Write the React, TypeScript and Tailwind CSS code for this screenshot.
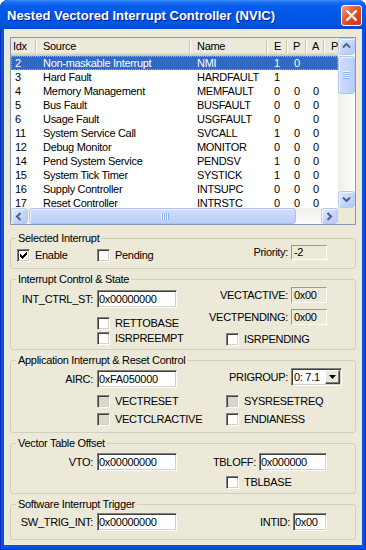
import type { ReactNode } from "react";

type Row = [string, string, string, string, string, string];

const rows: Row[] = [
  ["2", "Non-maskable Interrupt", "NMI", "1", "0", ""],
  ["3", "Hard Fault", "HARDFAULT", "1", "", ""],
  ["4", "Memory Management", "MEMFAULT", "0", "0", "0"],
  ["5", "Bus Fault", "BUSFAULT", "0", "0", "0"],
  ["6", "Usage Fault", "USGFAULT", "0", "", "0"],
  ["11", "System Service Call", "SVCALL", "1", "0", "0"],
  ["12", "Debug Monitor", "MONITOR", "0", "0", "0"],
  ["14", "Pend System Service", "PENDSV", "1", "0", "0"],
  ["15", "System Tick Timer", "SYSTICK", "1", "0", "0"],
  ["16", "Supply Controller", "INTSUPC", "0", "0", "0"],
  ["17", "Reset Controller", "INTRSTC", "0", "0", "0"],
];

const cols = [
  { label: "Idx", w: "w-[26px]", hpl: "pl-[2px]", pl: "pl-[4px]" },
  { label: "Source", w: "w-[154px]", hpl: "pl-[6px]", pl: "pl-[6px]" },
  { label: "Name", w: "w-[77px]", hpl: "pl-[6px]", pl: "pl-[6px]" },
  { label: "E", w: "w-[20px]", hpl: "pl-[6px]", pl: "pl-[6px]" },
  { label: "P", w: "w-[19px]", hpl: "pl-[5px]", pl: "pl-[6px]" },
  { label: "A", w: "w-[18px]", hpl: "pl-[5px]", pl: "pl-[6px]" },
  { label: "P", w: "w-[40px]", hpl: "pl-[6px]", pl: "pl-[6px]" },
];

function Check({ checked = false, disabled = false }: { checked?: boolean; disabled?: boolean }) {
  return (
    <span
      className={`block h-[13px] w-[13px] shrink-0 border border-t-[#808080] border-l-[#808080] border-b-white border-r-white shadow-[inset_1px_1px_0_#404040,inset_-1px_-1px_0_#D4D0C8] ${
        disabled ? "bg-[#D9D6CD]" : "bg-white"
      }`}
    >
      {checked && (
        <svg width="11" height="11" viewBox="0 0 11 11" shapeRendering="crispEdges" className="block">
          <rect x="2" y="4" width="1" height="3" fill="#000" />
          <rect x="3" y="5" width="1" height="3" fill="#000" />
          <rect x="4" y="6" width="1" height="3" fill="#000" />
          <rect x="5" y="5" width="1" height="3" fill="#000" />
          <rect x="6" y="4" width="1" height="3" fill="#000" />
          <rect x="7" y="3" width="1" height="3" fill="#000" />
          <rect x="8" y="2" width="1" height="3" fill="#000" />
        </svg>
      )}
    </span>
  );
}

function CheckRow({
  label,
  checked,
  disabled,
  className = "",
}: {
  label: string;
  checked?: boolean;
  disabled?: boolean;
  className?: string;
}) {
  return (
    <div className={`flex items-center gap-[5px] ${className}`}>
      <Check checked={checked} disabled={disabled} />
      <span className="leading-[13px] whitespace-nowrap">{label}</span>
    </div>
  );
}

function Edit({ value, w, h = "h-[18px]", ro = false }: { value: string; w: string; h?: string; ro?: boolean }) {
  const look = ro
    ? "border-t-[#9C9A8E] border-l-[#9C9A8E] border-b-white border-r-white bg-[#ECE9D8] pl-[2px]"
    : "border-t-[#808080] border-l-[#808080] border-b-white border-r-white bg-white pl-[1px] shadow-[inset_1px_1px_0_#404040,inset_-1px_-1px_0_#D4D0C8]";
  return (
    <div className={`flex shrink-0 items-center overflow-hidden whitespace-nowrap border ${look} ${w} ${h}`}>
      {value}
    </div>
  );
}

function Group({ title, h, children }: { title: string; h: string; children: ReactNode }) {
  return (
    <div className={`relative flex shrink-0 rounded-[3px] border border-[#D0D0BF] ${h}`}>
      <span className="absolute -top-[7px] left-[5px] bg-[#ECE9D8] px-[2px] leading-[13px] whitespace-nowrap">
        {title}
      </span>
      {children}
    </div>
  );
}

function Arrow({ dir }: { dir: "up" | "down" | "left" | "right" }) {
  const d = {
    up: "M1 5.5 L4.5 2 L8 5.5",
    down: "M1 2.5 L4.5 6 L8 2.5",
    left: "M5.5 1 L2 4.5 L5.5 8",
    right: "M2.5 1 L6 4.5 L2.5 8",
  }[dir];
  return (
    <svg width="9" height="9" viewBox="0 0 9 9" className="block">
      <path d={d} fill="none" stroke="#4D6185" strokeWidth="2" />
    </svg>
  );
}

function SBtn({ dir, size }: { dir: "up" | "down" | "left" | "right"; size: string }) {
  return (
    <div
      className={`flex shrink-0 items-center justify-center rounded-[3px] border border-[#B7CAF5] bg-[linear-gradient(135deg,#E0EAFE,#C2D3FB_60%,#B3C8F6)] shadow-[inset_1px_1px_0_#F2F6FF] ${size}`}
    >
      <Arrow dir={dir} />
    </div>
  );
}

function VScroll() {
  return (
    <div className="flex h-[170px] w-[17px] shrink-0 flex-col bg-[linear-gradient(90deg,#F0EFE9,#FDFDFA)]">
      <SBtn dir="up" size="h-[17px] w-[17px]" />
      <div className="mt-[1px] flex h-[38px] w-[17px] flex-col items-center justify-center rounded-[3px] border border-[#AFC3F0] bg-[linear-gradient(90deg,#CFDDFE,#BBCEF8)] shadow-[inset_1px_1px_0_#EEF3FF]">
        <div className="h-[2px] w-[7px] border-t border-t-[#EEF4FE] bg-[#8DAEF4]" />
        <div className="h-[2px] w-[7px] border-t border-t-[#EEF4FE] bg-[#8DAEF4]" />
        <div className="h-[2px] w-[7px] border-t border-t-[#EEF4FE] bg-[#8DAEF4]" />
        <div className="h-[2px] w-[7px] border-t border-t-[#EEF4FE] bg-[#8DAEF4]" />
      </div>
      <div className="flex-1" />
      <SBtn dir="down" size="h-[17px] w-[17px]" />
    </div>
  );
}

function HScroll() {
  return (
    <div className="flex h-[16px] w-[327px] shrink-0 bg-[linear-gradient(180deg,#F0EFE9,#FDFDFA)]">
      <SBtn dir="left" size="h-[16px] w-[17px]" />
      <div className="ml-[1px] flex h-[16px] w-[267px] items-center justify-center rounded-[3px] border border-[#AFC3F0] bg-[linear-gradient(180deg,#CFDDFE,#BBCEF8)] shadow-[inset_1px_1px_0_#EEF3FF]">
        <div className="flex h-[7px] pl-[4px]">
          <div className="h-[7px] w-[2px] border-l border-l-[#EEF4FE] bg-[#8DAEF4]" />
          <div className="h-[7px] w-[2px] border-l border-l-[#EEF4FE] bg-[#8DAEF4]" />
          <div className="h-[7px] w-[2px] border-l border-l-[#EEF4FE] bg-[#8DAEF4]" />
          <div className="h-[7px] w-[2px] border-l border-l-[#EEF4FE] bg-[#8DAEF4]" />
        </div>
      </div>
      <div className="flex-1" />
      <SBtn dir="right" size="h-[16px] w-[17px]" />
    </div>
  );
}

function ListView() {
  return (
    <div className="flex h-[188px] w-[346px] shrink-0 flex-col border border-[#7F9DB9] bg-white">
      <div className="flex h-[170px]">
        <div className="flex w-[327px] flex-col overflow-hidden">
          <div className="flex h-[18px] shrink-0 bg-[#EBEADB] shadow-[inset_0_-1px_0_#CBC7B8,inset_0_-2px_0_#D6D2C2,inset_0_-3px_0_#E2DECD]">
            {cols.map((c, i) => (
              <div key={i} className={`flex h-full shrink-0 ${c.w}`}>
                <span className={`flex flex-1 items-center overflow-hidden whitespace-nowrap pb-[1px] ${c.hpl}`}>
                  {c.label}
                </span>
                <span className="mt-[2px] mb-[2px] w-[2px] shrink-0 border-l border-r border-l-[#C7C5B2] border-r-white" />
              </div>
            ))}
          </div>
          <div className="flex flex-col">
            {rows.map((r, i) => {
              const sel = i === 0;
              return (
                <div
                  key={i}
                  className={`flex h-[14px] shrink-0 leading-[14px] ${
                    sel ? "bg-[#316AC5] text-white outline-1 -outline-offset-1 outline-dotted outline-[#D9A441]" : ""
                  }`}
                >
                  {r.map((v, j) => (
                    <span key={j} className={`shrink-0 overflow-hidden whitespace-nowrap ${cols[j].w} ${cols[j].pl}`}>
                      {v}
                    </span>
                  ))}
                </div>
              );
            })}
          </div>
        </div>
        <VScroll />
      </div>
      <div className="flex h-[16px]">
        <HScroll />
        <div className="w-[17px] bg-[#ECE9D8]" />
      </div>
    </div>
  );
}

function LabeledEdit({
  label,
  value,
  w,
  h,
  ro,
  className = "",
  labelW = "",
}: {
  label: string;
  value: string;
  w: string;
  h?: string;
  ro?: boolean;
  className?: string;
  labelW?: string;
}) {
  return (
    <div className={`flex items-center ${labelW ? "gap-[4px]" : "justify-end gap-[3px]"} ${className}`}>
      <span className={`whitespace-nowrap ${labelW} ${labelW ? "text-right" : ""}`}>{label}</span>
      <Edit value={value} w={w} h={h} ro={ro} />
    </div>
  );
}

function Dropdown() {
  return (
    <div className="flex h-[18px] w-[51px] shrink-0 items-stretch border border-t-[#808080] border-l-[#808080] border-b-white border-r-white bg-white p-[1px] shadow-[inset_1px_1px_0_#404040,inset_-1px_-1px_0_#D4D0C8]">
      <span className="flex flex-1 items-center pl-[1px] whitespace-nowrap">0: 7.1</span>
      <span className="flex w-[15px] items-center justify-center border border-t-white border-l-white border-r-[#404040] border-b-[#404040] bg-[#ECE9D8] shadow-[inset_-1px_-1px_0_#808080]">
        <svg width="7" height="4" viewBox="0 0 7 4" className="block">
          <path d="M0 0 H7 L3.5 4 Z" fill="#000" />
        </svg>
      </span>
    </div>
  );
}

export default function App() {
  return (
    <div className="flex h-[550px] w-[366px] flex-col overflow-hidden rounded-t-[8px] bg-[#0352E0] pb-[5px] font-['Liberation_Sans',Arial,sans-serif] text-[11px] tracking-[-0.3px] text-black shadow-[inset_1px_0_0_#0A2FB8,inset_-1px_0_0_#0A2FB8,inset_0_-1px_0_#0A2FB8]">
      <div className="flex h-[29px] shrink-0 items-start justify-between rounded-t-[8px] bg-[linear-gradient(180deg,#3B8CF6_0%,#1A6EF2_8%,#0A5EEC_18%,#0057E6_50%,#0054E2_82%,#0048D4_100%)] pl-[7px] pr-[4px]">
        <span className="mt-[8px] text-[13px] leading-[16px] font-bold tracking-normal text-white [text-shadow:1px_1px_#0A1C8A]">
          Nested Vectored Interrupt Controller (NVIC)
        </span>
        <div className="mt-[5px] flex h-[21px] w-[21px] items-center justify-center rounded-[3px] border border-white bg-[linear-gradient(135deg,#F2A68C_0%,#E4623F_35%,#D4461F_70%,#C0391A_100%)]">
          <svg width="11" height="11" viewBox="0 0 11 11" className="block">
            <path d="M1.2 1.2 L9.8 9.8 M9.8 1.2 L1.2 9.8" stroke="#fff" strokeWidth="2.2" strokeLinecap="square" />
          </svg>
        </div>
      </div>

      <div className="mx-[4px] flex flex-1 flex-col bg-[#ECE9D8] px-[6px] pt-[8px]">
        <ListView />

        <div className="mt-[13px]">
          <Group title="Selected Interrupt" h="h-[31px]">
            <CheckRow label="Enable" checked className="mt-[10px] ml-[6px] w-[80px] self-start" />
            <CheckRow label="Pending" className="mt-[10px] self-start" />
            <LabeledEdit label="Priority:" value="-2" w="w-[36px]" h="h-[15px]" ro className="mt-[5px] mr-[28px] ml-auto self-start" />
          </Group>
        </div>

        <div className="mt-[10px]">
          <Group title="Interrupt Control & State" h="h-[71px]">
            <div className="flex flex-col">
              <LabeledEdit label="INT_CTRL_ST:" value="0x00000000" w="w-[80px]" labelW="w-[82px]" className="mt-[10px]" />
              <CheckRow label="RETTOBASE" className="mt-[9px] ml-[86px]" />
              <CheckRow label="ISRPREEMPT" className="mt-[2px] ml-[86px]" />
            </div>
            <div className="mr-[28px] ml-auto flex flex-col items-end">
              <LabeledEdit label="VECTACTIVE:" value="0x00" w="w-[36px]" h="h-[16px]" ro className="mt-[7px]" />
              <LabeledEdit label="VECTPENDING:" value="0x00" w="w-[36px]" h="h-[16px]" ro className="mt-[5px]" />
              <CheckRow label="ISRPENDING" className="mt-[8px] w-[101px]" />
            </div>
          </Group>
        </div>

        <div className="mt-[10px]">
          <Group title="Application Interrupt & Reset Control" h="h-[73px]">
            <div className="flex flex-col">
              <LabeledEdit label="AIRC:" value="0xFA050000" w="w-[80px]" labelW="w-[82px]" className="mt-[9px]" />
              <CheckRow label="VECTRESET" disabled className="mt-[7px] ml-[86px]" />
              <CheckRow label="VECTCLRACTIVE" disabled className="mt-[5px] ml-[86px]" />
            </div>
            <div className="mr-[13px] ml-auto flex flex-col items-end">
              <div className="mt-[7px] flex items-center gap-[3px]">
                <span className="whitespace-nowrap">PRIGROUP:</span>
                <Dropdown />
              </div>
              <CheckRow label="SYSRESETREQ" disabled className="mt-[9px] w-[116px]" />
              <CheckRow label="ENDIANESS" className="mt-[5px] w-[116px]" />
            </div>
          </Group>
        </div>

        <div className="mt-[10px]">
          <Group title="Vector Table Offset" h="h-[51px]">
            <div className="flex flex-col">
              <LabeledEdit label="VTO:" value="0x00000000" w="w-[80px]" labelW="w-[82px]" className="mt-[9px]" />
            </div>
            <div className="mr-[28px] ml-auto flex flex-col items-end">
              <LabeledEdit label="TBLOFF:" value="0x000000" w="w-[68px]" className="mt-[9px]" />
              <CheckRow label="TBLBASE" className="mt-[5px] w-[101px]" />
            </div>
          </Group>
        </div>

        <div className="mt-[10px]">
          <Group title="Software Interrupt Trigger" h="h-[36px]">
            <div className="flex flex-col">
              <LabeledEdit label="SW_TRIG_INT:" value="0x00000000" w="w-[80px]" labelW="w-[82px]" className="mt-[8px]" />
            </div>
            <div className="mr-[28px] ml-auto flex flex-col items-end">
              <LabeledEdit label="INTID:" value="0x00" w="w-[34px]" className="mt-[8px]" />
            </div>
          </Group>
        </div>
      </div>
    </div>
  );
}
